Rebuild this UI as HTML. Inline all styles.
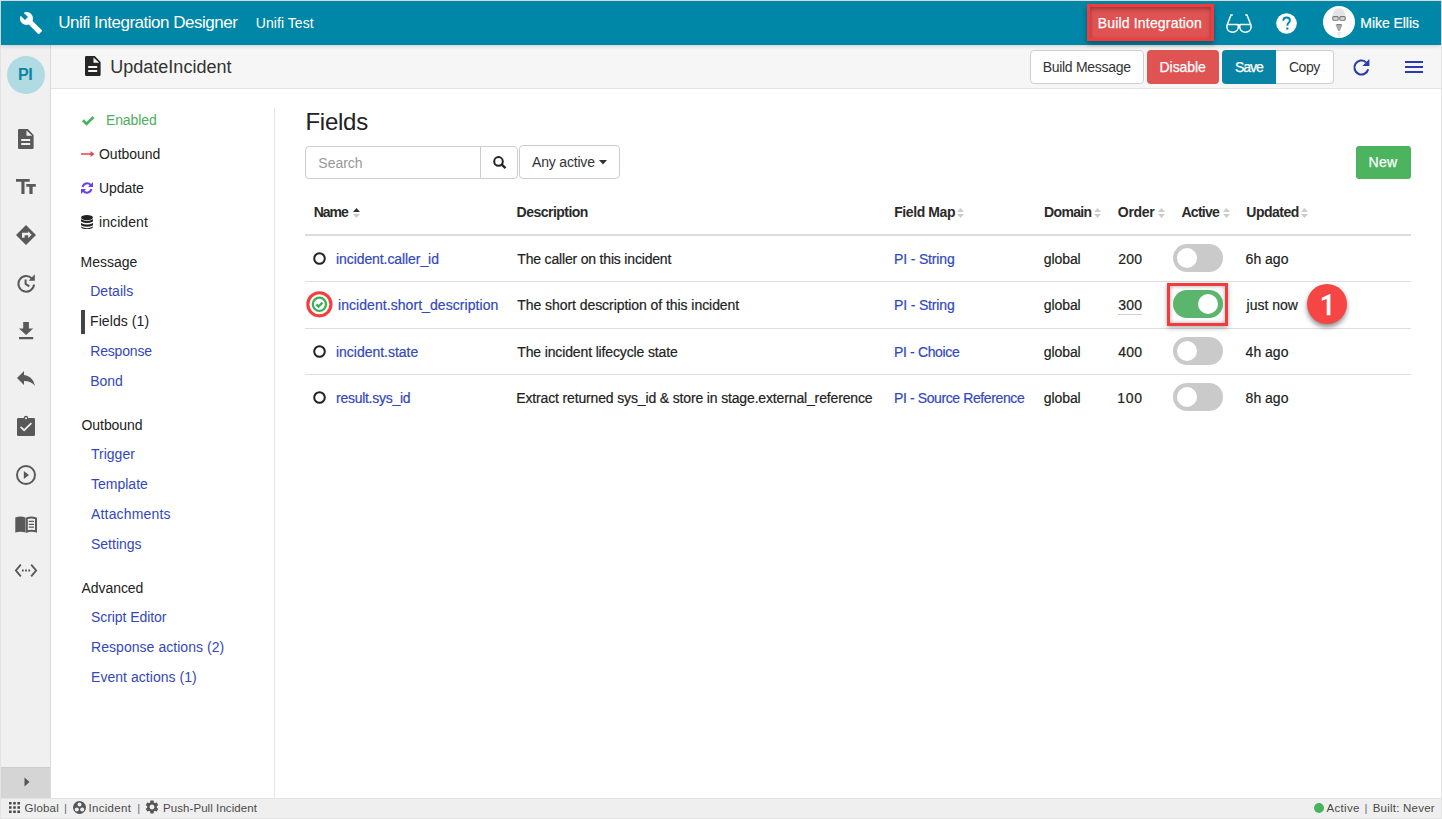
<!DOCTYPE html>
<html><head><meta charset="utf-8">
<style>
html,body{margin:0;padding:0;width:1442px;height:819px;overflow:hidden;}
body{position:relative;background:#e3e3e3;font-family:"Liberation Sans",sans-serif;}
.t{position:absolute;white-space:nowrap;line-height:1;z-index:5;}
.a{position:absolute;box-sizing:border-box;}
.ic{position:absolute;display:block;overflow:visible;z-index:4;}
.btn{position:absolute;box-sizing:border-box;border-radius:4px;}
.tg{position:absolute;width:50px;height:28px;border-radius:14px;background:#cacaca;}
.tg::after{content:"";position:absolute;left:4px;top:4px;width:20px;height:20px;border-radius:50%;background:#fff;}
.tg.on{background:#5cb56d;}
.tg.on::after{left:25px;}
.rb{position:absolute;height:1px;left:305px;width:1106px;background:#dedede;}
</style></head><body>
<!-- frame -->
<div class="a" style="left:1px;top:1px;width:1440px;height:817px;background:#fff;"></div>
<!-- header -->
<div class="a" style="left:1px;top:1px;width:1440px;height:44px;background:#0086a6;box-shadow:0 1px 4px rgba(0,0,0,.17);z-index:2;"></div>
<!-- sidebar -->
<div class="a" style="left:1px;top:45px;width:50px;height:753px;background:#f0f0f0;border-right:1px solid #dadada;"></div>
<div class="a" style="left:1px;top:767px;width:49px;height:31px;background:#d5d5d5;border-top:1px solid #cdcdcd;"></div>
<svg class="ic" style="left:23px;top:776px" width="8" height="12" viewBox="0 0 8 12"><path fill="#555" d="M1.5 1.5 L6.5 6 L1.5 10.5Z"/></svg>
<!-- toolbar -->
<div class="a" style="left:51px;top:45px;width:1390px;height:44px;background:#f6f6f6;border-bottom:1px solid #e3e3e3;"></div>
<!-- divider -->
<div class="a" style="left:274px;top:108px;width:1px;height:690px;background:#e6e6e6;"></div>
<!-- status -->
<div class="a" style="left:1px;top:798px;width:1440px;height:20px;background:#efefef;border-top:1px solid #e2e2e2;"></div>
<div id="icons"></div>
<!-- header icons -->
<svg class="ic" style="left:19px;top:11px" width="24" height="24" viewBox="0 0 24 24"><path fill="#fff" d="M22.7 19l-9.1-9.1c.9-2.3.4-5-1.5-6.9-2-2-5-2.4-7.4-1.3L9 6 6 9 1.6 4.7C.4 7.1.9 10.1 2.9 12.1c1.9 1.9 4.6 2.4 6.9 1.5l9.1 9.1c.4.4 1 .4 1.4 0l2.3-2.3c.5-.4.5-1.1.1-1.4z"/></svg>
<!-- Build Integration highlighted button -->
<div class="a" style="left:1087px;top:4px;width:127px;height:37px;border:3px solid #f23b3f;background:#df5353;box-shadow:inset 0 2px 4px rgba(0,0,0,.35), 0 3px 5px rgba(0,0,0,.35);z-index:3;"></div>
<!-- glasses -->
<svg class="ic" style="left:1226px;top:13.5px" width="26" height="20" viewBox="0 0 26 20"><g fill="none" stroke="#fff" stroke-width="1.5"><path d="M1.4 10.4 H11.7 C12.2 11.2 12.3 12.1 12.3 13.1 C12.3 16.1 9.8 18.2 6.6 18.2 C3.4 18.2 0.9 16.1 0.9 13.1 C0.9 12.1 1 11.2 1.4 10.4Z"/><path d="M14.3 10.4 H24.6 C25 11.2 25.1 12.1 25.1 13.1 C25.1 16.1 22.6 18.2 19.4 18.2 C16.2 18.2 13.7 16.1 13.7 13.1 C13.7 12.1 13.8 11.2 14.3 10.4Z"/><path d="M12 11 Q13 10.3 14 11"/><path d="M1.3 10.6 L5 1 H6.8"/><path d="M24.7 10.6 L21 1 H19.2"/></g></svg>
<!-- question -->
<svg class="ic" style="left:1276px;top:12.5px" width="21" height="21" viewBox="0 0 21 21"><circle cx="10.5" cy="10.5" r="10.3" fill="#fff"/><path d="M7.3 7.7 C7.3 5.6 8.7 4.5 10.6 4.5 C12.5 4.5 13.9 5.7 13.9 7.4 C13.9 9.6 11.4 9.8 11.4 12.3 L11.4 12.8" fill="none" stroke="#0086a6" stroke-width="1.9"/><rect x="10.3" y="14.5" width="2.1" height="2.1" fill="#0086a6"/></svg>
<!-- avatar -->
<svg class="ic" style="left:1323px;top:6px" width="32" height="32" viewBox="0 0 32 32"><circle cx="16" cy="16" r="16" fill="#fff"/><path d="M9.5 12 Q9.5 2.2 16 2.2 Q22.5 2.2 22.5 12Z" fill="#e4e4e4"/><rect x="9.8" y="10.6" width="5.4" height="3.6" rx="1" fill="#ddd" stroke="#777" stroke-width="1.1"/><rect x="16.8" y="10.6" width="5.4" height="3.6" rx="1" fill="#ddd" stroke="#777" stroke-width="1.1"/><path d="M12.5 18.5 H19.5 L17 25 H15Z" fill="#aaa"/><path d="M13.5 18.6 H18.5" stroke="#777" stroke-width="1"/><path d="M14 26 L18 26 L16.5 31 H15.5Z" fill="#e8e8e8"/></svg>

<!-- sidebar avatar -->
<div class="a" style="left:7px;top:56px;width:38px;height:38px;border-radius:50%;background:#b0dbe3;z-index:3;"></div>
<!-- sidebar icons (color #595959) -->
<svg class="ic" style="left:18px;top:129px" width="16" height="20" viewBox="0 0 16 20"><path fill="#595959" d="M1.2 0 H9.8 L15.6 6 V18.8 Q15.6 20 14.4 20 H1.2 Q0 20 0 18.8 V1.2 Q0 0 1.2 0Z M8.5 1.5 V6.8 H14.2Z M3.2 10 V12 H12.2 V10Z M3.2 13.9 V15.9 H12.2 V13.9Z" fill-rule="evenodd"/></svg>
<svg class="ic" style="left:16px;top:179px" width="20" height="15" viewBox="0 0 20 15"><path fill="#595959" d="M0 0 H13.7 V2.7 H8.5 V15 H5.4 V2.7 H0Z M10.3 5.1 H19.8 V7.8 H16.6 V15 H13.4 V7.8 H10.3Z"/></svg>
<svg class="ic" style="left:16px;top:225px" width="20" height="20" viewBox="0 0 20 20"><path fill="#595959" fill-rule="evenodd" d="M10 0 L20 10 L10 20 L0 10Z M6 7.8 V12.7 H8.6 V10.2 H12.2 V13.2 L15.6 9.7 L12.2 6.3 V7.8Z"/></svg>
<svg class="ic" style="left:17px;top:273.5px" width="19" height="19" viewBox="0 0 19 19"><g fill="none" stroke="#595959" stroke-width="2"><path d="M17 10.5 A7.8 7.8 0 1 1 14.8 4.4"/><path d="M8.6 5.4 V9.9 L12.3 12.3"/></g><path fill="#595959" d="M17.8 0.3 V6.8 H11.6Z"/></svg>
<svg class="ic" style="left:19px;top:321.5px" width="14" height="18" viewBox="0 0 14 18"><path fill="#595959" d="M4.2 0 H9.9 V6.4 H14.2 L7.1 13 L0 6.4 H4.2Z M0 15.1 H14.2 V17.3 H0Z"/></svg>
<svg class="ic" style="left:14.3px;top:366px" width="24" height="24" viewBox="0 0 24 24"><path fill="#595959" d="M10 9V5l-7 7 7 7v-4.1c5 0 8.5 1.6 11 5.1-1-5-4-10-11-11z"/></svg>
<svg class="ic" style="left:17px;top:416px" width="18" height="20" viewBox="0 0 18 20"><path fill="#595959" fill-rule="evenodd" d="M1.3 2 H6.8 A2.2 2.2 0 0 1 11.2 2 H16.7 Q18 2 18 3.3 V18.7 Q18 20 16.7 20 H1.3 Q0 20 0 18.7 V3.3 Q0 2 1.3 2Z M9 1.3 A1 1 0 1 0 9 3.3 A1 1 0 1 0 9 1.3Z M3 11.5 L4.2 10.2 L7.1 13.1 L13.8 6.4 L15 7.7 L7.1 15.6Z"/></svg>
<svg class="ic" style="left:16px;top:465px" width="20" height="20" viewBox="0 0 20 20"><circle cx="10" cy="10" r="9" fill="none" stroke="#595959" stroke-width="2"/><path fill="#595959" d="M7.8 6 V14 L13 10Z"/></svg>
<svg class="ic" style="left:15px;top:515.5px" width="22" height="17" viewBox="0 0 22 17"><path fill="#595959" d="M0.3 1.5 Q5.5 -0.6 10.5 1.5 V16.5 Q5.5 14.8 0.3 16.5Z"/><path fill="none" stroke="#595959" stroke-width="2" d="M11.8 2.4 Q16 0.6 21 2.4 V15.4 Q16 13.8 11.8 15.6Z"/><path fill="none" stroke="#595959" stroke-width="1.3" d="M13.8 5.4 H19 M13.8 8.3 H19 M13.8 11.2 H19"/></svg>
<svg class="ic" style="left:15px;top:564px" width="22" height="13" viewBox="0 0 22 13"><path fill="none" stroke="#595959" stroke-width="1.9" d="M5.8 0.7 L0.9 6.5 L5.8 12.3 M16.2 0.7 L21.1 6.5 L16.2 12.3"/><path fill="#595959" d="M6.9 5.6 H8.7 V7.4 H6.9Z M10.1 5.6 H11.9 V7.4 H10.1Z M13.3 5.6 H15.1 V7.4 H13.3Z"/></svg>

<!-- toolbar icons -->
<svg class="ic" style="left:85px;top:56px" width="16" height="20" viewBox="0 0 16 20"><path fill="#262626" d="M1.2 0 H9.8 L15.6 6 V18.8 Q15.6 20 14.4 20 H1.2 Q0 20 0 18.8 V1.2 Q0 0 1.2 0Z M8.5 1.5 V6.8 H14.2Z M3.2 10 V12 H12.2 V10Z M3.2 13.9 V15.9 H12.2 V13.9Z" fill-rule="evenodd"/></svg>
<div class="btn" style="left:1030px;top:50px;width:114px;height:34px;background:#fff;border:1px solid #cfcfcf;"></div>
<div class="btn" style="left:1147px;top:50px;width:72px;height:34px;background:#e05353;"></div>
<div class="btn" style="left:1222px;top:50px;width:54px;height:34px;background:#0a84a4;border-radius:4px 0 0 4px;"></div>
<div class="btn" style="left:1276px;top:50px;width:58px;height:34px;background:#fff;border:1px solid #cfcfcf;border-left:none;border-radius:0 4px 4px 0;"></div>
<svg class="ic" style="left:1353px;top:59px" width="17" height="16" viewBox="0 0 17 16"><path fill="none" stroke="#2a3bb0" stroke-width="2.1" d="M15.2 10.2 A7 7 0 1 1 13 3.2"/><path fill="#2a3bb0" d="M16.4 0 V7 H9.4Z"/></svg>
<svg class="ic" style="left:1405px;top:60px" width="18" height="14" viewBox="0 0 18 14"><path fill="#2a3ab2" d="M0 0.9 H18 V2.9 H0Z M0 6 H18 V8 H0Z M0 11.1 H18 V13.1 H0Z"/></svg>

<!-- left nav icons -->
<svg class="ic" style="left:82px;top:115.5px" width="13" height="10" viewBox="0 0 13 10"><path fill="#47b35f" d="M0 5.2 L1.9 3.3 L4.6 6 L10.6 0 L12.5 1.9 L4.6 9.8Z"/></svg>
<svg class="ic" style="left:81px;top:151px" width="14" height="7" viewBox="0 0 14 7"><path fill="#e04646" d="M0 2.3 H9.5 V0 L13.5 3 L9.5 6 V3.7 H0Z"/></svg>
<svg class="ic" style="left:81px;top:182px" width="12" height="12" viewBox="0 0 12 12"><path fill="none" stroke="#6a40f0" stroke-width="2" d="M1.6 5 A4.6 4.6 0 0 1 9.6 3 M10.4 7 A4.6 4.6 0 0 1 2.4 9"/><path fill="#6a40f0" d="M12 0 V5 H7Z M0 12 V7 H5Z"/></svg>
<svg class="ic" style="left:81px;top:215px" width="12" height="14" viewBox="0 0 12 14"><g fill="#222"><ellipse cx="6" cy="2.6" rx="6" ry="2.6"/><path d="M0 4.3 Q6 7.6 12 4.3 V6.6 Q6 9.6 0 6.6Z"/><path d="M0 8 Q6 11.2 12 8 V10.3 Q6 13.3 0 10.3Z"/><path d="M0 11.6 Q6 14.8 12 11.6 V11.7 Q12 14 6 14 Q0 14 0 11.7Z"/></g></svg>
<div class="a" style="left:81px;top:310px;width:4px;height:24px;background:#444;"></div>

<!-- search controls -->
<div class="btn" style="left:305px;top:146px;width:176px;height:33px;border:1px solid #cdcdcd;border-radius:4px 0 0 4px;background:#fff;"></div>
<div class="btn" style="left:480px;top:146px;width:38px;height:33px;border:1px solid #cdcdcd;border-radius:0 4px 4px 0;background:#fff;"></div>
<svg class="ic" style="left:493px;top:156px" width="14" height="13" viewBox="0 0 14 13"><circle cx="5.5" cy="5.4" r="4.3" fill="none" stroke="#222" stroke-width="2"/><path d="M8.5 8.4 L12.5 12.2" stroke="#222" stroke-width="2.4"/></svg>
<div class="btn" style="left:519px;top:145px;width:101px;height:34px;border:1px solid #cdcdcd;background:#fff;"></div>
<svg class="ic" style="left:599px;top:160px" width="8" height="5" viewBox="0 0 8 5"><path fill="#333" d="M0 0 H8 L4 4.5Z"/></svg>
<div class="btn" style="left:1356px;top:146px;width:55px;height:33px;background:#4cb35f;border-radius:3px;"></div>

<!-- table -->
<div class="a" style="left:305px;top:234px;width:1106px;height:2px;background:#dddddd;"></div>
<div class="rb" style="top:281px"></div>
<div class="rb" style="top:328px"></div>
<div class="rb" style="top:374px"></div>
<!-- sort icons -->
<svg class="ic" style="left:352.5px;top:207.5px" width="7" height="10" viewBox="0 0 7 10"><path fill="#333" d="M0 4 L3.5 0 L7 4Z"/><path fill="#ccc" d="M0 6 H7 L3.5 10Z"/></svg>
<svg class="ic" style="left:957px;top:207.5px" width="7" height="10" viewBox="0 0 7 10"><path fill="#ccc" d="M0 4 L3.5 0 L7 4Z M0 6 H7 L3.5 10Z"/></svg>
<svg class="ic" style="left:1094px;top:207.5px" width="7" height="10" viewBox="0 0 7 10"><path fill="#ccc" d="M0 4 L3.5 0 L7 4Z M0 6 H7 L3.5 10Z"/></svg>
<svg class="ic" style="left:1157.5px;top:207.5px" width="7" height="10" viewBox="0 0 7 10"><path fill="#ccc" d="M0 4 L3.5 0 L7 4Z M0 6 H7 L3.5 10Z"/></svg>
<svg class="ic" style="left:1222.5px;top:207.5px" width="7" height="10" viewBox="0 0 7 10"><path fill="#ccc" d="M0 4 L3.5 0 L7 4Z M0 6 H7 L3.5 10Z"/></svg>
<svg class="ic" style="left:1300.5px;top:207.5px" width="7" height="10" viewBox="0 0 7 10"><path fill="#ccc" d="M0 4 L3.5 0 L7 4Z M0 6 H7 L3.5 10Z"/></svg>
<!-- row status circles -->
<svg class="ic" style="left:313px;top:251.5px" width="13" height="13" viewBox="0 0 13 13"><circle cx="6.5" cy="6.5" r="5.3" fill="none" stroke="#222" stroke-width="2"/></svg>
<svg class="ic" style="left:313px;top:344.5px" width="13" height="13" viewBox="0 0 13 13"><circle cx="6.5" cy="6.5" r="5.3" fill="none" stroke="#222" stroke-width="2"/></svg>
<svg class="ic" style="left:313px;top:390.5px" width="13" height="13" viewBox="0 0 13 13"><circle cx="6.5" cy="6.5" r="5.3" fill="none" stroke="#222" stroke-width="2"/></svg>
<svg class="ic" style="left:306px;top:291px" width="27" height="27" viewBox="0 0 27 27"><circle cx="13.4" cy="13.3" r="11.6" fill="#fff" stroke="#f83b3b" stroke-width="3.1"/><circle cx="13.4" cy="13.3" r="6.6" fill="none" stroke="#3fae5a" stroke-width="2.3"/><path d="M10.3 13.3 L12.5 15.5 L16.4 11.7" fill="none" stroke="#3fae5a" stroke-width="2.4"/></svg>
<!-- toggles -->
<div class="tg" style="left:1173px;top:244px"></div>
<div class="tg on" style="left:1173px;top:290px"></div>
<div class="tg" style="left:1173px;top:337px"></div>
<div class="tg" style="left:1173px;top:383px"></div>
<div class="a" style="left:1167px;top:283px;width:61px;height:43px;border:3px solid #f23b3f;box-shadow:inset 0 0 4px rgba(0,0,0,.35), 0 2px 5px rgba(0,0,0,.3);z-index:3;"></div>
<div class="a" style="left:1118px;top:314px;width:24px;height:1px;background:#d0d0d0;"></div>
<div class="a" style="left:1307px;top:284px;width:40px;height:40px;border-radius:50%;background:#f64545;box-shadow:0 3px 5px rgba(0,0,0,.45);z-index:3;"></div>

<!-- status bar icons -->
<svg class="ic" style="left:9px;top:801.5px" width="11" height="11" viewBox="0 0 11 11"><path fill="#4a4a4a" d="M0 0H2.6V2.6H0Z M4.2 0H6.8V2.6H4.2Z M8.4 0H11V2.6H8.4Z M0 4.2H2.6V6.8H0Z M4.2 4.2H6.8V6.8H4.2Z M8.4 4.2H11V6.8H8.4Z M0 8.4H2.6V11H0Z M4.2 8.4H6.8V11H4.2Z M8.4 8.4H11V11H8.4Z"/></svg>
<svg class="ic" style="left:73px;top:801px" width="13" height="13" viewBox="0 0 13 13"><circle cx="6.5" cy="6.5" r="6.5" fill="#555"/><circle cx="6.5" cy="3.6" r="2" fill="#efefef"/><circle cx="3.8" cy="8.6" r="2" fill="#efefef"/><circle cx="9.2" cy="8.6" r="2" fill="#efefef"/></svg>
<svg class="ic" style="left:144.3px;top:799.2px" width="16" height="16" viewBox="0 0 24 24"><path fill="#555" d="M19.14 12.94c.04-.3.06-.61.06-.94 0-.32-.02-.64-.07-.94l2.03-1.58a.49.49 0 0 0 .12-.61l-1.92-3.32a.488.488 0 0 0-.59-.22l-2.39.96c-.5-.38-1.03-.7-1.62-.94l-.36-2.54a.484.484 0 0 0-.48-.41h-3.84c-.24 0-.43.17-.47.41l-.36 2.54c-.59.24-1.13.57-1.62.94l-2.39-.96c-.22-.08-.47 0-.59.22L2.74 8.87c-.12.21-.08.47.12.61l2.03 1.58c-.05.3-.09.63-.09.94s.02.64.07.94l-2.03 1.58a.49.49 0 0 0-.12.61l1.92 3.32c.12.22.37.29.59.22l2.39-.96c.5.38 1.03.7 1.62.94l.36 2.54c.05.24.24.41.48.41h3.84c.24 0 .44-.17.47-.41l.36-2.54c.59-.24 1.13-.56 1.62-.94l2.39.96c.22.08.47 0 .59-.22l1.92-3.32c.12-.22.07-.47-.12-.61l-2.01-1.58zM12 15.6c-1.98 0-3.6-1.62-3.6-3.6s1.62-3.6 3.6-3.6 3.6 1.62 3.6 3.6-1.62 3.6-3.6 3.6z"/></svg>
<div class="a" style="left:1313.5px;top:803px;width:10px;height:10px;border-radius:50%;background:#47b35f;z-index:3;"></div>
<svg class="ic" style="left:1320px;top:294px" width="13" height="22" viewBox="0 0 13 22"><path fill="#fff" d="M9.9 0 H10.4 V21.2 H6.7 V5 L1.8 6.8 V3.8Z"/></svg>

<!-- texts -->
<div class="t" style="left:58.3px;top:14.0px;font-size:17px;color:#fff;letter-spacing:-0.49px;">Unifi Integration Designer</div>
<div class="t" style="left:255.8px;top:16.0px;font-size:14px;color:#fff;letter-spacing:0.06px;">Unifi Test</div>
<div class="t" style="left:1097.7px;top:15.5px;font-size:14px;color:#fff;letter-spacing:0.18px;-webkit-text-stroke:0.25px #fff;">Build Integration</div>
<div class="t" style="left:1360.3px;top:16.0px;font-size:14px;color:#fff;letter-spacing:-0.05px;-webkit-text-stroke:0.2px #fff;">Mike Ellis</div>
<div class="t" style="left:18.1px;top:67.0px;font-size:16px;color:#0b84a5;font-weight:bold;letter-spacing:-0.57px;">PI</div>
<div class="t" style="left:110.2px;top:58.0px;font-size:18px;color:#333;letter-spacing:0.02px;">UpdateIncident</div>
<div class="t" style="left:1042.7px;top:59.7px;font-size:14px;color:#333;letter-spacing:-0.30px;">Build Message</div>
<div class="t" style="left:1159.6px;top:59.7px;font-size:14px;color:#fff;letter-spacing:-0.08px;-webkit-text-stroke:0.25px #fff;">Disable</div>
<div class="t" style="left:1235.0px;top:59.9px;font-size:14px;color:#fff;letter-spacing:-1.07px;-webkit-text-stroke:0.25px #fff;">Save</div>
<div class="t" style="left:1288.9px;top:59.9px;font-size:14px;color:#333;letter-spacing:-0.43px;">Copy</div>
<div class="t" style="left:105.9px;top:113.4px;font-size:14px;color:#4cae60;letter-spacing:-0.08px;">Enabled</div>
<div class="t" style="left:99.0px;top:147.0px;font-size:14px;color:#222;letter-spacing:-0.02px;">Outbound</div>
<div class="t" style="left:99.0px;top:180.5px;font-size:14px;color:#222;letter-spacing:-0.07px;">Update</div>
<div class="t" style="left:99.0px;top:214.7px;font-size:14px;color:#222;letter-spacing:0.08px;">incident</div>
<div class="t" style="left:80.5px;top:254.5px;font-size:14px;color:#222;letter-spacing:0.01px;">Message</div>
<div class="t" style="left:90.2px;top:283.6px;font-size:14px;color:#3248bc;letter-spacing:0.03px;">Details</div>
<div class="t" style="left:90.0px;top:314.2px;font-size:14px;color:#222;letter-spacing:0.08px;">Fields (1)</div>
<div class="t" style="left:90.2px;top:343.7px;font-size:14px;color:#3248bc;letter-spacing:-0.16px;">Response</div>
<div class="t" style="left:90.2px;top:373.5px;font-size:14px;color:#3248bc;">Bond</div>
<div class="t" style="left:81.5px;top:418.0px;font-size:14px;color:#222;letter-spacing:-0.06px;">Outbound</div>
<div class="t" style="left:91.0px;top:447.0px;font-size:14px;color:#3248bc;">Trigger</div>
<div class="t" style="left:91.0px;top:477.2px;font-size:14px;color:#3248bc;">Template</div>
<div class="t" style="left:91.0px;top:506.8px;font-size:14px;color:#3248bc;letter-spacing:0.17px;">Attachments</div>
<div class="t" style="left:91.0px;top:537.0px;font-size:14px;color:#3248bc;">Settings</div>
<div class="t" style="left:81.6px;top:581.0px;font-size:14px;color:#222;letter-spacing:-0.07px;">Advanced</div>
<div class="t" style="left:91.0px;top:610.0px;font-size:14px;color:#3248bc;letter-spacing:-0.07px;">Script Editor</div>
<div class="t" style="left:91.0px;top:640.2px;font-size:14px;color:#3248bc;letter-spacing:0.05px;">Response actions (2)</div>
<div class="t" style="left:91.0px;top:670.0px;font-size:14px;color:#3248bc;letter-spacing:0.04px;">Event actions (1)</div>
<div class="t" style="left:305.4px;top:109.7px;font-size:24px;color:#222;letter-spacing:-0.24px;">Fields</div>
<div class="t" style="left:318.3px;top:155.7px;font-size:14px;color:#999;">Search</div>
<div class="t" style="left:532.0px;top:155.0px;font-size:14px;color:#333;letter-spacing:-0.18px;">Any active</div>
<div class="t" style="left:1368.5px;top:155.0px;font-size:14px;color:#fff;letter-spacing:0.30px;-webkit-text-stroke:0.25px #fff;">New</div>
<div class="t" style="left:313.8px;top:205.0px;font-size:14px;color:#2a2a2a;font-weight:bold;letter-spacing:-1.05px;">Name</div>
<div class="t" style="left:516.6px;top:205.0px;font-size:14px;color:#2a2a2a;font-weight:bold;letter-spacing:-0.52px;">Description</div>
<div class="t" style="left:894.2px;top:205.0px;font-size:14px;color:#2a2a2a;font-weight:bold;letter-spacing:-0.41px;">Field Map</div>
<div class="t" style="left:1044.0px;top:205.0px;font-size:14px;color:#2a2a2a;font-weight:bold;letter-spacing:-0.64px;">Domain</div>
<div class="t" style="left:1117.8px;top:205.0px;font-size:14px;color:#2a2a2a;font-weight:bold;letter-spacing:-0.29px;">Order</div>
<div class="t" style="left:1181.5px;top:205.0px;font-size:14px;color:#2a2a2a;font-weight:bold;letter-spacing:-0.75px;">Active</div>
<div class="t" style="left:1246.3px;top:205.0px;font-size:14px;color:#2a2a2a;font-weight:bold;letter-spacing:-0.51px;">Updated</div>
<div class="t" style="left:336.0px;top:252.0px;font-size:14px;color:#3248bc;letter-spacing:-0.08px;-webkit-text-stroke:0.2px currentColor;">incident.caller_id</div>
<div class="t" style="left:517.3px;top:252.0px;font-size:14px;color:#222;letter-spacing:-0.18px;-webkit-text-stroke:0.2px currentColor;">The caller on this incident</div>
<div class="t" style="left:894.0px;top:252.0px;font-size:14px;color:#3248bc;letter-spacing:-0.15px;-webkit-text-stroke:0.2px currentColor;">PI - String</div>
<div class="t" style="left:1043.7px;top:252.0px;font-size:14px;color:#222;letter-spacing:-0.07px;-webkit-text-stroke:0.2px currentColor;">global</div>
<div class="t" style="left:1118.2px;top:252.0px;font-size:14px;color:#222;letter-spacing:0.26px;-webkit-text-stroke:0.2px currentColor;">200</div>
<div class="t" style="left:1245.6px;top:252.0px;font-size:14px;color:#222;-webkit-text-stroke:0.2px currentColor;">6h ago</div>
<div class="t" style="left:338.0px;top:298.0px;font-size:14px;color:#3248bc;letter-spacing:0.06px;-webkit-text-stroke:0.2px currentColor;">incident.short_description</div>
<div class="t" style="left:517.3px;top:298.0px;font-size:14px;color:#222;letter-spacing:-0.06px;-webkit-text-stroke:0.2px currentColor;">The short description of this incident</div>
<div class="t" style="left:894.0px;top:298.0px;font-size:14px;color:#3248bc;letter-spacing:-0.15px;-webkit-text-stroke:0.2px currentColor;">PI - String</div>
<div class="t" style="left:1043.7px;top:298.0px;font-size:14px;color:#222;letter-spacing:-0.07px;-webkit-text-stroke:0.2px currentColor;">global</div>
<div class="t" style="left:1118.2px;top:298.0px;font-size:14px;color:#222;letter-spacing:0.26px;-webkit-text-stroke:0.2px currentColor;">300</div>
<div class="t" style="left:1246.6px;top:298.0px;font-size:14px;color:#222;-webkit-text-stroke:0.2px currentColor;">just now</div>
<div class="t" style="left:336.0px;top:345.0px;font-size:14px;color:#3248bc;letter-spacing:-0.02px;-webkit-text-stroke:0.2px currentColor;">incident.state</div>
<div class="t" style="left:517.3px;top:345.0px;font-size:14px;color:#222;letter-spacing:-0.14px;-webkit-text-stroke:0.2px currentColor;">The incident lifecycle state</div>
<div class="t" style="left:894.0px;top:345.0px;font-size:14px;color:#3248bc;letter-spacing:-0.35px;-webkit-text-stroke:0.2px currentColor;">PI - Choice</div>
<div class="t" style="left:1043.7px;top:345.0px;font-size:14px;color:#222;letter-spacing:-0.07px;-webkit-text-stroke:0.2px currentColor;">global</div>
<div class="t" style="left:1118.2px;top:345.0px;font-size:14px;color:#222;letter-spacing:0.26px;-webkit-text-stroke:0.2px currentColor;">400</div>
<div class="t" style="left:1245.6px;top:345.0px;font-size:14px;color:#222;-webkit-text-stroke:0.2px currentColor;">4h ago</div>
<div class="t" style="left:336.0px;top:391.0px;font-size:14px;color:#3248bc;letter-spacing:-0.27px;-webkit-text-stroke:0.2px currentColor;">result.sys_id</div>
<div class="t" style="left:516.3px;top:391.0px;font-size:14px;color:#222;letter-spacing:-0.15px;-webkit-text-stroke:0.2px currentColor;">Extract returned sys_id &amp; store in stage.external_reference</div>
<div class="t" style="left:894.0px;top:391.0px;font-size:14px;color:#3248bc;letter-spacing:-0.39px;-webkit-text-stroke:0.2px currentColor;">PI - Source Reference</div>
<div class="t" style="left:1043.7px;top:391.0px;font-size:14px;color:#222;letter-spacing:-0.07px;-webkit-text-stroke:0.2px currentColor;">global</div>
<div class="t" style="left:1117.2px;top:391.0px;font-size:14px;color:#222;letter-spacing:0.76px;-webkit-text-stroke:0.2px currentColor;">100</div>
<div class="t" style="left:1245.6px;top:391.0px;font-size:14px;color:#222;-webkit-text-stroke:0.2px currentColor;">8h ago</div>
<div class="t" style="left:24.5px;top:803.0px;font-size:11.5px;color:#4a4a4a;letter-spacing:0.20px;">Global</div>
<div class="t" style="left:64.0px;top:803.0px;font-size:11.5px;color:#6a6a80;">|</div>
<div class="t" style="left:88.5px;top:803.0px;font-size:11.5px;color:#4a4a4a;letter-spacing:0.30px;">Incident</div>
<div class="t" style="left:137.3px;top:803.0px;font-size:11.5px;color:#6a6a80;">|</div>
<div class="t" style="left:163.0px;top:803.0px;font-size:11.5px;color:#4a4a4a;letter-spacing:0.07px;">Push-Pull Incident</div>
<div class="t" style="left:1326.6px;top:803.0px;font-size:11.5px;color:#4a4a4a;letter-spacing:0.30px;">Active</div>
<div class="t" style="left:1364.4px;top:803.0px;font-size:11.5px;color:#6a6a80;">|</div>
<div class="t" style="left:1372.7px;top:803.0px;font-size:11.5px;color:#4a4a4a;letter-spacing:0.23px;">Built: Never</div>
</body></html>
